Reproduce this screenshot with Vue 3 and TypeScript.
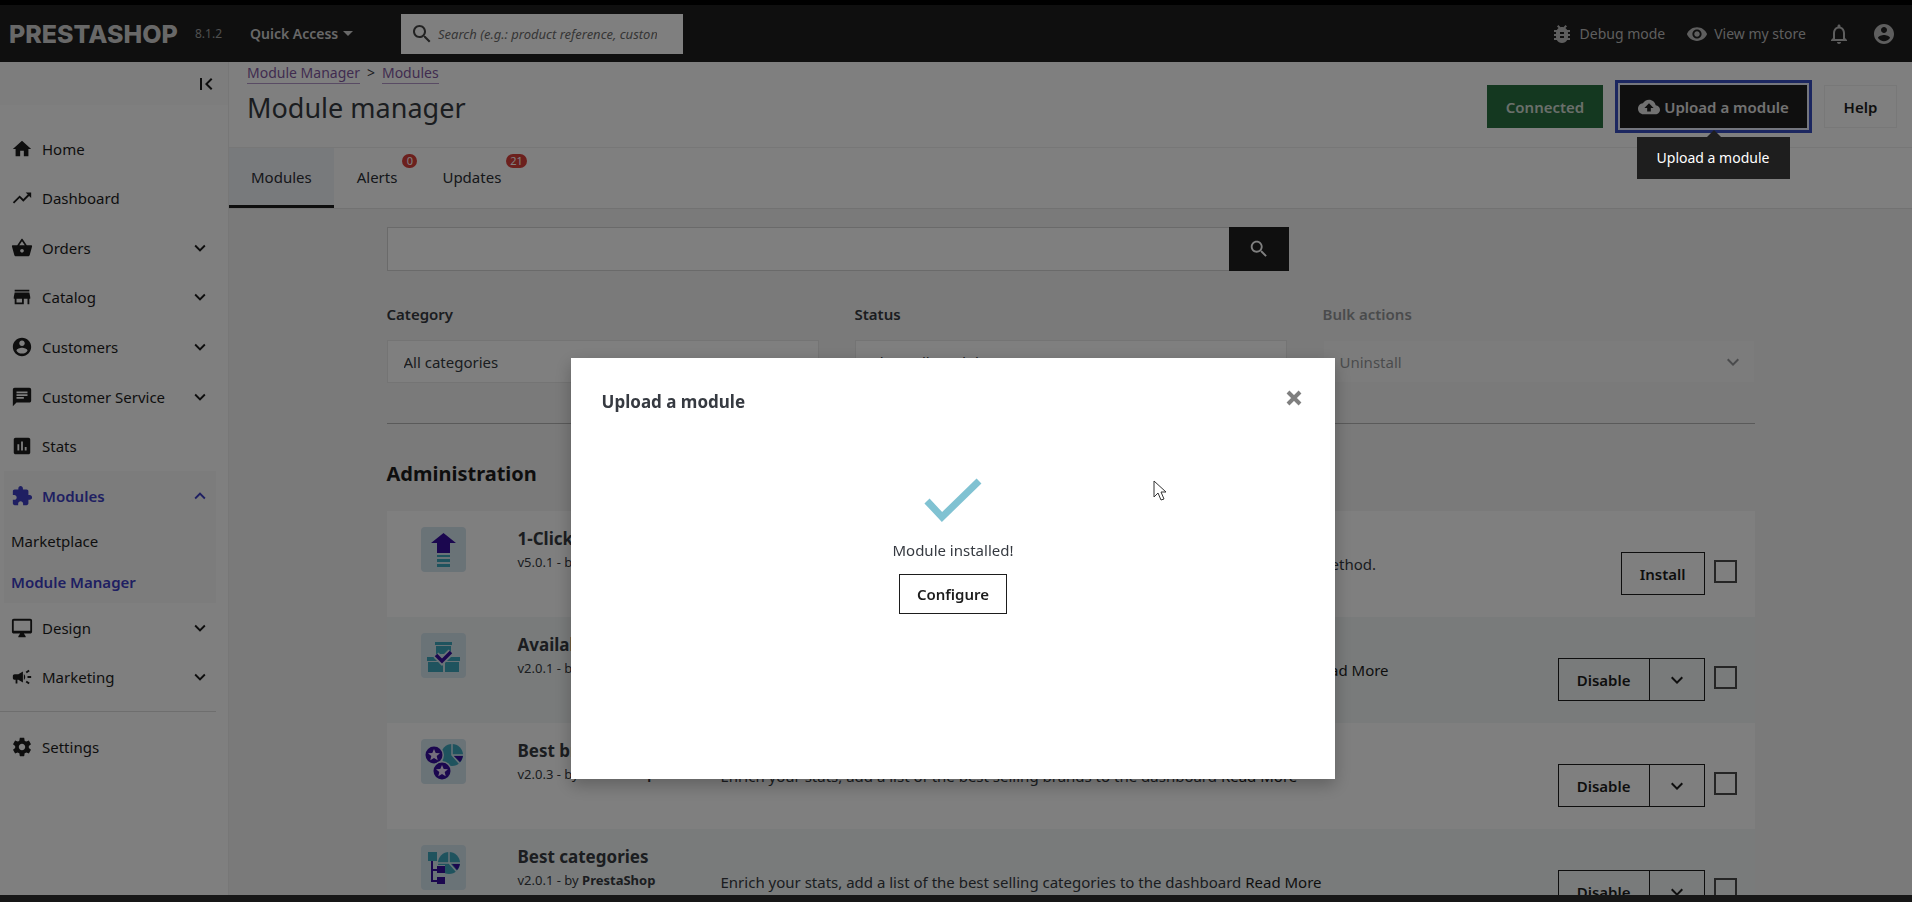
<script setup lang="ts">
import { ref } from 'vue'

interface NavItem {
  label: string
  icon: string
  expandable?: boolean
}

interface ModuleItem {
  name: string
  version: string
  description: string
  more: boolean
  action: string
  art: string
}

const icons: Record<string, string> = {
  home: 'M10 20v-6h4v6h5v-8h3L12 3 2 12h3v8z',
  trend: 'M16 6l2.29 2.29-4.88 4.88-4-4L2 16.59 3.41 18l6-6 4 4 6.3-6.29L22 12V6z',
  basket: 'M17.21 9l-4.38-6.56c-.19-.28-.51-.42-.83-.42-.32 0-.64.14-.83.43L6.79 9H2c-.55 0-1 .45-1 1 0 .09.01.18.04.27l2.54 9.27c.23.84 1 1.46 1.92 1.46h13c.92 0 1.69-.62 1.93-1.46l2.54-9.27L23 10c0-.55-.45-1-1-1h-4.79zM9 9l3-4.4L15 9H9zm3 8c-1.1 0-2-.9-2-2s.9-2 2-2 2 .9 2 2-.9 2-2 2z',
  store: 'M20 4H4v2h16V4zm1 10v-2l-1-5H4l-1 5v2h1v6h10v-6h4v6h2v-6h1zm-9 4H6v-4h6v4z',
  account: 'M12 2C6.48 2 2 6.48 2 12s4.48 10 10 10 10-4.48 10-10S17.52 2 12 2zm0 3c1.66 0 3 1.34 3 3s-1.34 3-3 3-3-1.34-3-3 1.34-3 3-3zm0 14.2c-2.5 0-4.71-1.28-6-3.22.03-1.99 4-3.08 6-3.08 1.99 0 5.97 1.09 6 3.08-1.29 1.94-3.5 3.22-6 3.22z',
  chat: 'M20 2H4c-1.1 0-1.99.9-1.99 2L2 22l4-4h14c1.1 0 2-.9 2-2V4c0-1.1-.9-2-2-2zM6 9h12v2H6V9zm8 5H6v-2h8v2zm4-6H6V6h12v2z',
  stats: 'M19 3H5c-1.1 0-2 .9-2 2v14c0 1.1.9 2 2 2h14c1.1 0 2-.9 2-2V5c0-1.1-.9-2-2-2zM9 17H7v-7h2v7zm4 0h-2V7h2v10zm4 0h-2v-4h2v4z',
  extension: 'M20.5 11H19V7c0-1.1-.9-2-2-2h-4V3.5C13 2.12 11.88 1 10.5 1S8 2.12 8 3.5V5H4c-1.1 0-1.99.9-1.99 2v3.8H3.5c1.49 0 2.7 1.21 2.7 2.7s-1.21 2.7-2.7 2.7H2V20c0 1.1.9 2 2 2h3.8v-1.5c0-1.49 1.21-2.7 2.7-2.7 1.49 0 2.7 1.21 2.7 2.7V22H17c1.1 0 2-.9 2-2v-4h1.5c1.38 0 2.5-1.12 2.5-2.5S21.88 11 20.5 11z',
  desktop: 'M21 2H3c-1.1 0-2 .9-2 2v12c0 1.1.9 2 2 2h7l-2 3v1h8v-1l-2-3h7c1.1 0 2-.9 2-2V4c0-1.1-.9-2-2-2zm0 13H3V4h18v11z',
  campaign: 'M18 11v2h4v-2h-4zm-2 6.61c.96.71 2.21 1.65 3.2 2.39.4-.53.8-1.07 1.2-1.6-.99-.74-2.24-1.68-3.2-2.4-.4.54-.8 1.08-1.2 1.61zM20.4 5.6c-.4-.53-.8-1.07-1.2-1.6-.99.74-2.24 1.68-3.2 2.4.4.53.8 1.07 1.2 1.6.96-.72 2.21-1.65 3.2-2.4zM4 9c-1.1 0-2 .9-2 2v2c0 1.1.9 2 2 2h1v4h2v-4h1l5 3V6L8 9H4zm11.5 3c0-1.33-.58-2.53-1.5-3.35v6.69c.92-.81 1.5-2.01 1.5-3.34z',
  settings: 'M19.43 12.98c.04-.32.07-.64.07-.98s-.03-.66-.07-.98l2.11-1.65c.19-.15.24-.42.12-.64l-2-3.46c-.12-.22-.39-.3-.61-.22l-2.49 1c-.52-.4-1.08-.73-1.69-.98l-.38-2.65C14.46 2.18 14.25 2 14 2h-4c-.25 0-.46.18-.49.42l-.38 2.65c-.61.25-1.17.59-1.69.98l-2.49-1c-.23-.09-.49 0-.61.22l-2 3.46c-.13.22-.07.49.12.64l2.11 1.65c-.04.32-.07.65-.07.98s.03.66.07.98l-2.11 1.65c-.19.15-.24.42-.12.64l2 3.46c.12.22.39.3.61.22l2.49-1c.52.4 1.08.73 1.69.98l.38 2.65c.03.24.24.42.49.42h4c.25 0 .46-.18.49-.42l.38-2.65c.61-.25 1.17-.59 1.69-.98l2.49 1c.23.09.49 0 .61-.22l2-3.46c.12-.22.07-.49-.12-.64l-2.11-1.65zM12 15.5c-1.93 0-3.5-1.57-3.5-3.5s1.57-3.5 3.5-3.5 3.5 1.57 3.5 3.5-1.57 3.5-3.5 3.5z',
  bug: 'M20 8h-2.81c-.45-.78-1.07-1.45-1.82-1.96L17 4.41 15.59 3l-2.17 2.17C12.96 5.06 12.49 5 12 5c-.49 0-.96.06-1.41.17L8.41 3 7 4.41l1.62 1.63C7.88 6.55 7.26 7.22 6.81 8H4v2h2.09c-.05.33-.09.66-.09 1v1H4v2h2v1c0 .34.04.67.09 1H4v2h2.81c1.04 1.79 2.97 3 5.19 3s4.15-1.21 5.19-3H20v-2h-2.09c.05-.33.09-.66.09-1v-1h2v-2h-2v-1c0-.34-.04-.67-.09-1H20V8zm-6 8h-4v-2h4v2zm0-4h-4v-2h4v2z',
  eye: 'M12 4.5C7 4.5 2.73 7.61 1 12c1.73 4.39 6 7.5 11 7.5s9.27-3.11 11-7.5c-1.73-4.39-6-7.5-11-7.5zM12 17c-2.76 0-5-2.24-5-5s2.24-5 5-5 5 2.24 5 5-2.24 5-5 5zm0-8c-1.66 0-3 1.34-3 3s1.34 3 3 3 3-1.34 3-3-1.34-3-3-3z',
  bell: 'M12 22c1.1 0 2-.9 2-2h-4c0 1.1.9 2 2 2zm6-6v-5c0-3.07-1.63-5.64-4.5-6.32V4c0-.83-.67-1.5-1.5-1.5s-1.5.67-1.5 1.5v.68C7.64 5.36 6 7.92 6 11v5l-2 2v1h16v-1l-2-2zm-2 1H8v-6c0-2.48 1.51-4.5 4-4.5s4 2.02 4 4.5v6z',
  cloud: 'M19.35 10.04C18.67 6.59 15.64 4 12 4 9.11 4 6.6 5.64 5.35 8.04 2.34 8.36 0 10.91 0 14c0 3.31 2.69 6 6 6h13c2.76 0 5-2.24 5-5 0-2.64-2.05-4.78-4.65-4.96zM14 13v4h-4v-4H7l5-5 5 5h-3z',
  search: 'M15.5 14h-.79l-.28-.27C15.41 12.59 16 11.11 16 9.5 16 5.91 13.09 3 9.5 3S3 5.91 3 9.5 5.91 16 9.5 16c1.61 0 3.09-.59 4.23-1.57l.27.28v.79l5 4.99L20.49 19l-4.99-5zm-6 0C7.01 14 5 11.99 5 9.5S7.01 5 9.5 5 14 7.01 14 9.5 11.99 14 9.5 14z',
  down: 'M16.59 8.59L12 13.17 7.41 8.59 6 10l6 6 6-6z',
  up: 'M12 8l-6 6 1.41 1.41L12 10.83l4.59 4.58L18 14z',
  collapse: 'M18.41 16.59L13.82 12l4.59-4.59L17 6l-6 6 6 6zM6 6h2v12H6z',
}

const mainNav: NavItem[] = [
  { label: 'Home', icon: 'home' },
  { label: 'Dashboard', icon: 'trend' },
  { label: 'Orders', icon: 'basket', expandable: true },
  { label: 'Catalog', icon: 'store', expandable: true },
  { label: 'Customers', icon: 'account', expandable: true },
  { label: 'Customer Service', icon: 'chat', expandable: true },
  { label: 'Stats', icon: 'stats' },
]

const lowerNav: NavItem[] = [
  { label: 'Design', icon: 'desktop', expandable: true },
  { label: 'Marketing', icon: 'campaign', expandable: true },
]

const modules: ModuleItem[] = [
  { name: '1-Click Upgrade', version: 'v5.0.1', description: 'Upgrade to the latest version of PrestaShop in a few clicks, thanks to this automated method.', more: false, action: 'Install', art: 'upgrade' },
  { name: 'Available quantities', version: 'v2.0.1', description: 'Enrich your stats, add a tab displaying the quantity of all products available for sale.', more: true, action: 'Disable', art: 'stock' },
  { name: 'Best brands', version: 'v2.0.3', description: 'Enrich your stats, add a list of the best selling brands to the dashboard', more: true, action: 'Disable', art: 'brands' },
  { name: 'Best categories', version: 'v2.0.1', description: 'Enrich your stats, add a list of the best selling categories to the dashboard', more: true, action: 'Disable', art: 'categories' },
]

const open = ref(true)
const query = ref('')
</script>

<template>
  <div class="shell">
    <header class="topbar">
      <a class="logo" href="#">PRESTASHOP</a>
      <span class="version">8.1.2</span>
      <button class="quick" type="button">Quick Access <span class="caret"></span></button>
      <label class="finder">
        <svg class="ic24" viewBox="0 0 24 24"><path :d="icons.search" /></svg>
        <input type="text" aria-label="Search" placeholder="Search (e.g.: product reference, customer name…)" />
      </label>
      <nav class="tools" aria-label="Tools">
        <a href="#"><svg class="ic24" viewBox="0 0 24 24"><path :d="icons.bug" /></svg>Debug mode</a>
        <a href="#"><svg class="ic22" viewBox="0 0 24 24"><path :d="icons.eye" /></svg>View my store</a>
        <button type="button" aria-label="Notifications"><svg class="ic24" viewBox="0 0 24 24"><path :d="icons.bell" /></svg></button>
        <button type="button" aria-label="Account"><svg class="ic24" viewBox="0 0 24 24"><path :d="icons.account" /></svg></button>
      </nav>
    </header>

    <div class="body">
      <aside class="side">
        <div class="fold">
          <button type="button" aria-label="Collapse menu"><svg class="ic24" viewBox="0 0 24 24"><path :d="icons.collapse" /></svg></button>
        </div>
        <nav aria-label="Main">
          <ul class="menu seven">
            <li v-for="item in mainNav" :key="item.label">
              <a href="#">
                <svg class="ic22" viewBox="0 0 24 24"><path :d="icons[item.icon]" /></svg>
                <span>{{ item.label }}</span>
                <svg v-if="item.expandable" class="ic22 arrow" viewBox="0 0 24 24"><path :d="icons.down" /></svg>
              </a>
            </li>
          </ul>
          <div class="group">
            <a class="head" href="#">
              <svg class="ic22" viewBox="0 0 24 24"><path :d="icons.extension" /></svg>
              <span>Modules</span>
              <svg class="ic22 arrow" viewBox="0 0 24 24"><path :d="icons.up" /></svg>
            </a>
            <ul class="sub">
              <li><a href="#">Marketplace</a></li>
              <li><a href="#" class="current">Module Manager</a></li>
            </ul>
          </div>
          <ul class="menu two">
            <li v-for="item in lowerNav" :key="item.label">
              <a href="#">
                <svg class="ic22" viewBox="0 0 24 24"><path :d="icons[item.icon]" /></svg>
                <span>{{ item.label }}</span>
                <svg class="ic22 arrow" viewBox="0 0 24 24"><path :d="icons.down" /></svg>
              </a>
            </li>
          </ul>
          <ul class="menu last">
            <li>
              <a href="#">
                <svg class="ic22" viewBox="0 0 24 24"><path :d="icons.settings" /></svg>
                <span>Settings</span>
              </a>
            </li>
          </ul>
        </nav>
      </aside>

      <main class="main">
        <div class="pagehead">
          <div class="titles">
            <nav class="crumbs" aria-label="Breadcrumb">
              <a href="#">Module Manager</a><span>&gt;</span><a href="#">Modules</a>
            </nav>
            <h1>Module manager</h1>
          </div>
          <div class="actions">
            <button type="button" class="btn green">Connected</button>
            <div class="tipwrap">
              <button type="button" class="btn dark" aria-describedby="upload-tip">
                <svg class="ic22" viewBox="0 0 24 24"><path :d="icons.cloud" /></svg>Upload a module
              </button>
              <div id="upload-tip" class="tip" role="tooltip">Upload a module</div>
            </div>
            <button type="button" class="btn help">Help</button>
          </div>
        </div>
        <nav class="tabs" aria-label="Sections">
          <a href="#" class="active">Modules</a>
          <a href="#">Alerts<span class="badge">0</span></a>
          <a href="#">Updates<span class="badge">21</span></a>
        </nav>

        <div class="content">
          <form class="search" @submit.prevent>
            <input v-model="query" type="text" aria-label="Search modules" />
            <button type="submit" aria-label="Search"><svg class="ic22" viewBox="0 0 24 24"><path :d="icons.search" /></svg></button>
          </form>
          <div class="filters">
            <div class="filter">
              <label for="category">Category</label>
              <div class="pick"><select id="category"><option>All categories</option></select>
                <svg class="ic24" viewBox="0 0 24 24"><path :d="icons.down" /></svg></div>
            </div>
            <div class="filter">
              <label for="status">Status</label>
              <div class="pick"><select id="status"><option>Show all modules</option></select>
                <svg class="ic24" viewBox="0 0 24 24"><path :d="icons.down" /></svg></div>
            </div>
            <div class="filter off">
              <label for="bulk">Bulk actions</label>
              <div class="pick"><select id="bulk" disabled><option>Uninstall</option></select>
                <svg class="ic24" viewBox="0 0 24 24"><path :d="icons.down" /></svg></div>
            </div>
          </div>
          <hr />
          <h2>Administration</h2>
          <ul class="modules">
            <li v-for="m in modules" :key="m.name">
              <svg class="art" viewBox="0 0 45 45" aria-hidden="true">
                <rect width="45" height="45" rx="4" fill="#d5e6ef" />
                <g v-if="m.art === 'upgrade'">
                  <path d="M22.500 6L35 16h-6v10H16V16h-6z" fill="#370f9f" />
                  <path d="M16 28h13v2H16zM16 32h13v3H16zM16 37h13v3H16z" fill="#3ea6bd" />
                </g>
                <g v-else-if="m.art === 'stock'">
                  <path d="M14 9h17v3H14zM15 13h15v8H15zM6 24h16v4H6zM24 24h15v4H24zM7 29h15v10H7zM24 29h14v10H24z" fill="#3ea6bd" />
                  <path d="M15 22l6 6 9-9" fill="none" stroke="#d5e6ef" stroke-width="7" />
                  <path d="M15 22l6 6 9-9" fill="none" stroke="#370f9f" stroke-width="3.500" />
                </g>
                <g v-else-if="m.art === 'brands'">
                  <circle cx="31" cy="16" r="11" fill="#3ea6bd" />
                  <path d="M31 4v12l8 9M31 16h12" stroke="#d5e6ef" stroke-width="1.500" fill="none" />
                  <path d="M33 17h9q-1 4-3 6z" fill="#370f9f" />
                  <circle cx="13" cy="16" r="10" fill="#d5e6ef" /><circle cx="13" cy="16" r="8.500" fill="#370f9f" />
                  <circle cx="21" cy="32" r="10" fill="#d5e6ef" /><circle cx="21" cy="32" r="8.500" fill="#370f9f" />
                  <path d="M13 10l1.700 4 4.300.3-3.300 2.800 1 4.200-3.700-2.300-3.700 2.300 1-4.200L7 14.300l4.300-.3z" fill="#eadffa" />
                  <path d="M21 26l1.700 4 4.300.3-3.300 2.800 1 4.200-3.700-2.300-3.700 2.300 1-4.200-3.300-2.800 4.300-.3z" fill="#eadffa" />
                </g>
                <g v-else>
                  <path d="M7 7h9v9H7z" fill="#3ea6bd" />
                  <circle cx="28" cy="18" r="11" fill="#3ea6bd" />
                  <path d="M28 6v12l8 9M17 18h23" stroke="#d5e6ef" stroke-width="1.500" fill="none" />
                  <path d="M31 19h8q-1 4-3 6z" fill="#370f9f" />
                  <path d="M15 20h9v9h-9z" fill="#d5e6ef" />
                  <path d="M11 16v20h6M11 25h6" stroke="#370f9f" stroke-width="2" fill="none" />
                  <path d="M16 21h8v7h-8zM16 32h8v7h-8z" fill="#370f9f" />
                </g>
              </svg>
              <div class="name">
                <h3>{{ m.name }}</h3>
                <p>{{ m.version }} - by <b>PrestaShop</b></p>
              </div>
              <p class="desc">{{ m.description }} <a v-if="m.more" href="#">Read More</a></p>
              <div class="do">
                <button type="button">{{ m.action }}</button>
                <button v-if="m.action === 'Disable'" type="button" class="toggle" aria-label="More actions">
                  <svg class="ic24" viewBox="0 0 24 24"><path :d="icons.down" /></svg>
                </button>
              </div>
              <input type="checkbox" :aria-label="'Select ' + m.name" />
            </li>
          </ul>
        </div>
      </main>
    </div>
    <footer class="edge"></footer>

    <div v-if="open" class="overlay">
      <section class="modal" role="dialog" aria-modal="true" aria-labelledby="modal-title">
        <div class="modalhead">
          <h2 id="modal-title">Upload a module</h2>
          <button type="button" aria-label="Close" @click="open = false">
            <svg viewBox="0 0 16 16"><path d="M2 2l12 12M14 2L2 14" /></svg>
          </button>
        </div>
        <div class="modalbody">
          <svg class="tick" viewBox="0 0 58 44"><path d="M3 23l15 16L55 3" /></svg>
          <p>Module installed!</p>
          <button type="button">Configure</button>
        </div>
        <svg class="pointer" viewBox="0 0 14 21"><path d="M1 1v16l4-4 3 7 3-1-3-7h5z" /></svg>
      </section>
    </div>
  </div>
</template>

<style>
html,
body {
  margin: 0;
  height: 100%;
  overflow: hidden;
}
</style>

<style scoped>
* {
  box-sizing: border-box;
}
.shell {
  display: flex;
  flex-direction: column;
  height: 100vh;
  overflow: hidden;
  border-top: 5px solid #000;
  background: #f1f1f1;
  font-family: "Noto Sans", "Open Sans", sans-serif;
  font-size: 15px;
  line-height: 20px;
  color: #363a41;
}
button,
input,
select {
  font: inherit;
  color: inherit;
  margin: 0;
}
button {
  padding: 0;
  border: 0;
  background: none;
}
a {
  color: inherit;
  text-decoration: none;
}
ul {
  list-style: none;
  margin: 0;
  padding: 0;
}
h1,
h2,
h3,
p {
  margin: 0;
}
svg {
  display: block;
  flex: none;
  fill: currentColor;
}
.ic22 {
  width: 22px;
  height: 22px;
}
.ic24 {
  width: 24px;
  height: 24px;
}

.topbar {
  display: flex;
  align-items: center;
  flex: none;
  height: 57px;
  padding: 0 16px 0 9px;
  background: #1e1e1e;
  color: #d0d0d0;
}
.logo {
  width: 186px;
  font-family: Inter, sans-serif;
  font-size: 25px;
  font-weight: 800;
}
.version {
  width: 55px;
  font-size: 12px;
  color: #a0a0a0;
}
.quick {
  display: flex;
  align-items: center;
  gap: 5px;
  width: 151px;
  font-size: 14px;
  font-weight: 600;
}
.caret {
  border: 5px solid transparent;
  border-top-color: currentColor;
  border-bottom: 0;
}
.finder {
  display: flex;
  align-items: center;
  gap: 4px;
  width: 282px;
  height: 40px;
  padding: 0 26px 0 9px;
  background: #fff;
  color: #444;
}
.finder input {
  flex: 1;
  min-width: 0;
  padding: 0;
  border: 0;
  background: none;
  font-size: 13px;
  font-style: italic;
}
.finder input::placeholder {
  color: #6c6c6c;
  opacity: 1;
}
.tools {
  display: flex;
  align-items: center;
  margin-left: auto;
  gap: 21px;
  color: #bdbdbd;
  font-size: 14px;
}
.tools a {
  display: flex;
  align-items: center;
  gap: 6px;
}

.body {
  display: flex;
  flex: 1;
  min-height: 0;
}
.side {
  flex: none;
  width: 229px;
  background: #fff;
  border-right: 1px solid #eee;
  color: #1d1d1d;
}
.fold {
  display: flex;
  justify-content: flex-end;
  align-items: center;
  height: 43px;
  margin-bottom: 19px;
  padding: 0 10px;
  background: #fafafa;
}
.menu {
  display: grid;
  grid-auto-rows: 1fr;
}
.seven {
  height: 347px;
}
.two {
  height: 99px;
}
.last {
  height: 60px;
  margin: 9px 12px 0 0;
  padding-top: 10px;
  border-top: 1px solid #dcdcdc;
}
.menu li {
  display: grid;
}
.menu a,
.head {
  display: flex;
  align-items: center;
  gap: 9px;
  padding-left: 11px;
}
.menu a {
  padding-right: 17px;
}
.arrow {
  margin-left: auto;
}
.group {
  margin: 0 12px 0 4px;
  background: #f8f8f8;
}
.head {
  height: 49px;
  padding: 0 5px 0 7px;
  color: #3e3fc4;
  font-weight: 600;
}
.sub {
  display: grid;
  grid-auto-rows: 1fr;
  height: 83px;
  padding-left: 7px;
}
.sub li {
  display: flex;
  align-items: center;
}
.current {
  color: #3e3fc4;
  font-weight: 600;
}

.main {
  flex: 1;
  min-width: 0;
  overflow: hidden;
  background: #f4f4f4;
}
.pagehead {
  display: flex;
  justify-content: space-between;
  height: 85px;
  padding: 0 15px 0 18px;
  background: #fff;
}
.crumbs {
  display: flex;
  gap: 7px;
  padding-top: 1px;
  font-size: 14px;
}
.crumbs a {
  color: #82599f;
  border-bottom: 1px solid #b296c8;
}
h1 {
  margin-top: 6px;
  font-size: 27px;
  line-height: 36px;
  font-weight: 400;
}
.actions {
  display: flex;
  align-items: flex-start;
  padding-top: 23px;
}
.btn {
  display: flex;
  align-items: center;
  justify-content: center;
  height: 43px;
  font-weight: 600;
}
.green {
  width: 116px;
  background: #297040;
  color: #d4dfd6;
}
.tipwrap {
  position: relative;
  margin: 0 17px;
}
.dark {
  width: 187px;
  gap: 4px;
  background: #1e1e1e;
  color: #e4e4e4;
  box-shadow: 0 0 0 2px #e8ecfc, 0 0 0 5px #394fc0;
}
.help {
  width: 73px;
  border: 1px solid #f0f0f0;
  color: #1d1d1d;
}
.tip {
  position: absolute;
  top: 52px;
  left: 50%;
  z-index: 20;
  width: 153px;
  margin-left: -77px;
  background: #1e1e1e;
  color: #fff;
  font-size: 14px;
  line-height: 42px;
  text-align: center;
}
.tip::before {
  content: "";
  position: absolute;
  top: -7px;
  left: 70px;
  border: 7px solid transparent;
  border-top: 0;
  border-bottom-color: #1e1e1e;
}
.tabs {
  display: flex;
  gap: 1px;
  height: 62px;
  border-top: 1px solid #eee;
  border-bottom: 1px solid #e4e4e4;
  background: #fff;
}
.tabs a {
  position: relative;
  padding: 19px 22px 0;
  color: #2c2f35;
}
.tabs .active {
  background: #f1f4f9;
  border-bottom: 3px solid #1d1d1d;
}
.badge {
  position: absolute;
  top: 6px;
  left: calc(100% - 17px);
  min-width: 15px;
  padding: 0 4px;
  border-radius: 7px;
  background: #d9403a;
  color: #fff;
  font-size: 11px;
  line-height: 14px;
  text-align: center;
}
.content {
  max-width: 1368px;
  margin: 0 auto;
  padding-top: 18px;
}
.search {
  display: flex;
  width: 66%;
  height: 44px;
}
.search input {
  flex: 1;
  padding: 0 12px;
  border: 1px solid #d4d4d4;
  border-right: 0;
  background: #fff;
}
.search button {
  display: grid;
  place-items: center;
  width: 60px;
  background: #1e1e1e;
  color: #fff;
}
.filters {
  display: grid;
  grid-template-columns: repeat(3, 1fr);
  gap: 36px;
  margin-top: 33px;
}
.filter label {
  display: block;
  margin-bottom: 16px;
  font-weight: 600;
}
.off {
  opacity: 0.5;
}
.pick {
  position: relative;
}
.pick select {
  width: 100%;
  height: 43px;
  padding: 0 16px;
  border: 1px solid #e8e8e8;
  border-radius: 0;
  appearance: none;
  background: #fff;
  opacity: 1;
}
.off select {
  border-color: #f4f4f4;
}
.pick svg {
  position: absolute;
  top: 10px;
  right: 10px;
}
hr {
  height: 1px;
  margin: 40px 0 36px;
  border: 0;
  background: #b4b4b4;
}
.content h2 {
  margin-bottom: 24px;
  font-size: 20px;
  line-height: 27px;
  color: #1d1d1d;
}
.modules li {
  display: flex;
  align-items: flex-start;
  height: 106px;
  padding: 16px 18px 0 34px;
  background: #fff;
}
.modules li:nth-child(even) {
  background: #f3f7f7;
}
.art {
  width: 45px;
  height: 45px;
}
.name {
  width: 203px;
  margin-left: 52px;
  white-space: nowrap;
}
h3 {
  font-size: 17px;
  line-height: 24px;
  font-weight: 700;
}
.name p {
  margin-top: 1px;
  font-size: 13px;
}
.desc {
  flex: 1;
  min-width: 0;
  margin-top: 27px;
  white-space: nowrap;
}
.desc a {
  color: #1d1d1d;
}
.do {
  display: flex;
  margin-top: 25px;
  border: 1px solid #1d1d1d;
}
.do button {
  height: 41px;
  padding: 0 18px;
  font-weight: 600;
  color: #1d1d1d;
}
.do .toggle {
  padding: 0 15px;
  border-left: 1px solid #1d1d1d;
}
.modules input {
  appearance: none;
  width: 23px;
  height: 23px;
  margin: 33px 0 0 9px;
  border: 2px solid #4a4a4a;
}

.edge {
  position: relative;
  z-index: 20;
  flex: none;
  height: 7px;
  background: #171717;
}
.overlay {
  position: fixed;
  inset: 0;
  z-index: 10;
  padding: 358px 6px 0 0;
  background: rgba(0, 0, 0, 0.5);
}
.modal {
  position: relative;
  width: 40vw;
  min-height: 421px;
  margin: 0 auto;
  background: #fff;
  box-shadow: 0 6px 16px rgba(0, 0, 0, 0.25);
}
.modalhead {
  display: flex;
  justify-content: space-between;
  padding: 32px 33px 0 31px;
}
.modalhead h2 {
  font-size: 17px;
  line-height: 24px;
  font-weight: 700;
}
.modalhead button {
  width: 16px;
  height: 16px;
}
.modalhead svg {
  width: 16px;
  height: 16px;
  stroke: #7f7f7f;
  stroke-width: 4;
}
.modalbody {
  display: flex;
  flex-direction: column;
  align-items: center;
}
.tick {
  width: 58px;
  height: 44px;
  margin: 64px 0 18px;
  fill: none;
  stroke: #80c2d2;
  stroke-width: 7;
}
.modalbody button {
  height: 40px;
  margin-top: 14px;
  padding: 0 17px;
  border: 1px solid #1d1d1d;
  color: #1d1d1d;
  font-weight: 600;
}
.pointer {
  position: absolute;
  left: 582px;
  top: 122px;
  width: 14px;
  height: 21px;
  fill: #fff;
  stroke: #333;
}
</style>
